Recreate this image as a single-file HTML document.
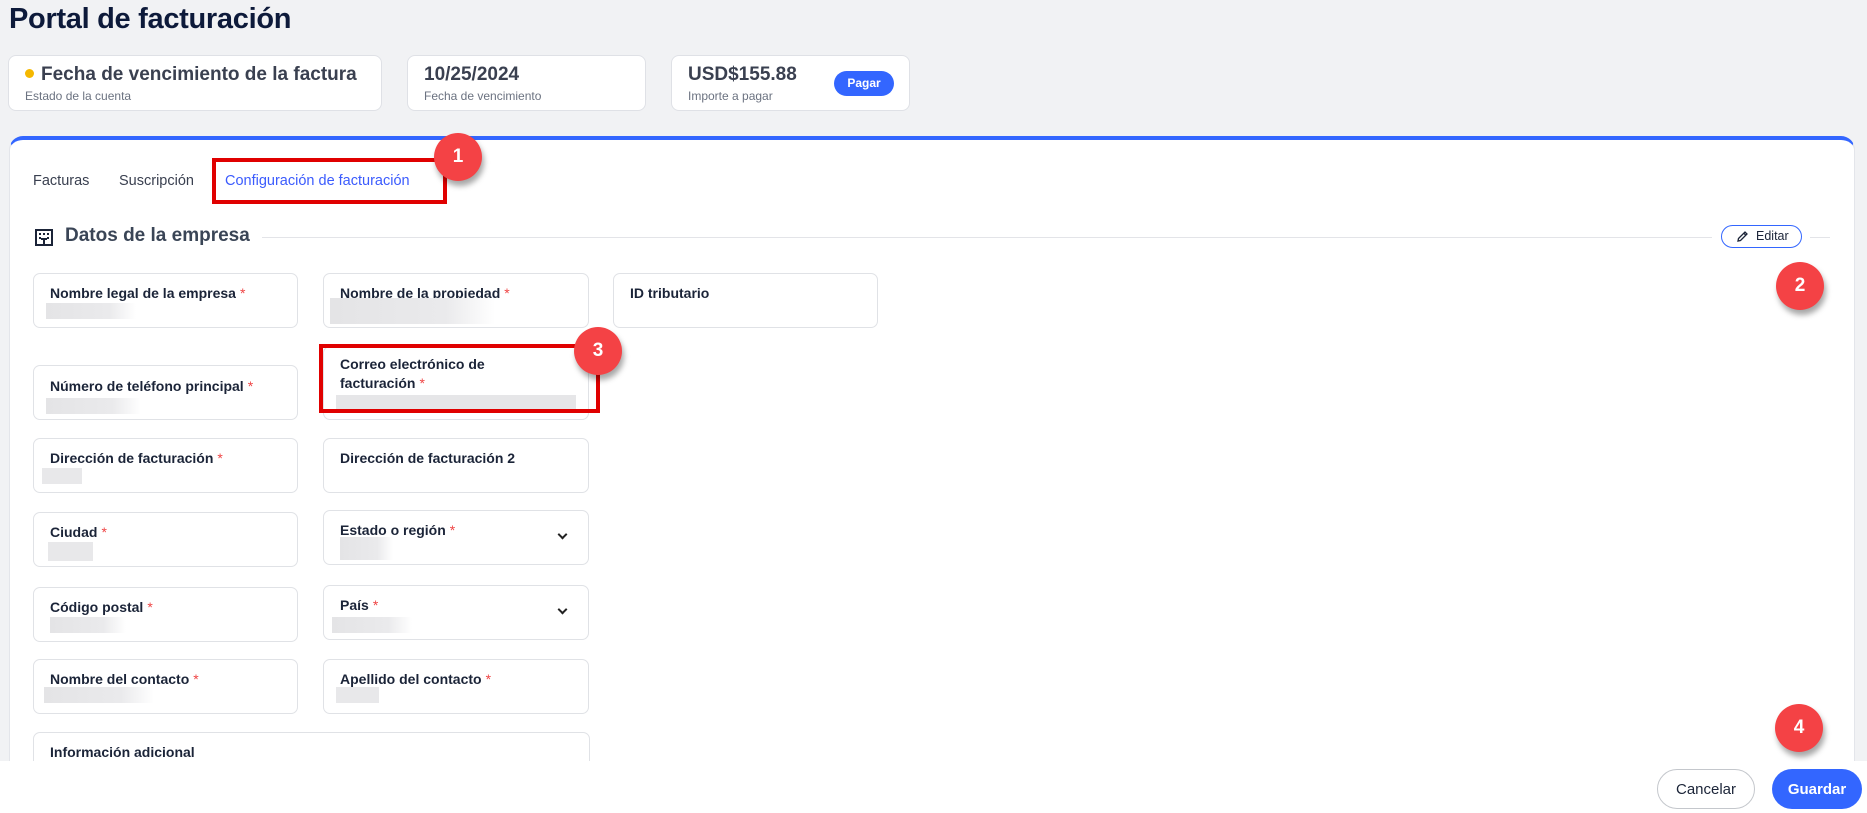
<!DOCTYPE html>
<html><head><meta charset="utf-8"><style>
*{box-sizing:border-box;margin:0;padding:0}
body{width:1867px;height:813px;background:#f1f2f4;font-family:"Liberation Sans",sans-serif;position:relative;overflow:hidden;color:#0f1b33}
.abs{position:absolute}
h1{position:absolute;left:9px;top:2px;font-size:29px;font-weight:bold;color:#0d1a3a;letter-spacing:-0.3px;line-height:34px}
.card{position:absolute;top:55px;height:56px;background:#fff;border:1px solid #dfe1e6;border-radius:8px}
.card .t{position:absolute;left:16px;top:8px;font-size:19px;font-weight:bold;color:#3a4050}
.card .s{position:absolute;left:16px;top:33px;font-size:12px;color:#6b7280}
.panel{position:absolute;left:9px;top:136px;width:1846px;height:640px;background:#fff;border-top:4px solid #3366ff;border-radius:14px 14px 0 0;border-left:1px solid #e3e5ea;border-right:1px solid #e3e5ea}
.tab{position:absolute;top:173px;font-size:14.5px;color:#3a4050}
.f{position:absolute;height:55px;background:#fff;border:1px solid #e0e2e6;border-radius:7px}
.f .l{position:absolute;left:16px;top:10px;font-size:14px;font-weight:bold;color:#1b2438;line-height:19px}
.f .l i{color:#ef4444;font-style:normal;font-weight:normal;margin-left:4px}
.f .p{position:absolute;height:16px;background:linear-gradient(90deg,#e4e4e6,#eaeaec 70%,#fff);top:29px}
.chev{position:absolute;right:22px;top:20px;width:7px;height:7px;border-right:2px solid #222;border-bottom:2px solid #222;transform:rotate(45deg)}
.badge{position:absolute;width:48px;height:48px;border-radius:50%;background:#f44245;color:#fff;font-weight:bold;font-size:19px;display:flex;align-items:center;justify-content:center;box-shadow:2px 5px 6px rgba(0,0,0,.35)}
.red{position:absolute;border:4px solid #e00000}
.btn{position:absolute;top:769px;height:40px;border-radius:20px;font-size:15px;display:flex;align-items:center;justify-content:center}
</style></head><body>
<h1>Portal de facturación</h1>
<div class="card" style="left:8px;width:374px"><div class="t"><span style="display:inline-block;width:9px;height:9px;border-radius:50%;background:#f5b800;margin-right:7px;vertical-align:2px"></span>Fecha de vencimiento de la factura</div><div class="s">Estado de la cuenta</div></div>
<div class="card" style="left:407px;width:239px"><div class="t">10/25/2024</div><div class="s">Fecha de vencimiento</div></div>
<div class="card" style="left:671px;width:239px"><div class="t">USD$155.88</div><div class="s">Importe a pagar</div><div class="abs" style="left:162px;top:15px;width:60px;height:25px;border-radius:13px;background:#3366ff;color:#fff;font-size:12px;font-weight:bold;text-align:center;line-height:25px">Pagar</div></div>
<div class="panel"></div>
<div class="tab" style="left:33px">Facturas</div>
<div class="tab" style="left:119px">Suscripción</div>
<div class="tab" style="left:225px;color:#3b5bfd">Configuración de facturación</div>
<div class="red" style="left:212px;top:158px;width:235px;height:46px"></div>
<svg class="abs" style="left:35px;top:229px" width="18" height="17" viewBox="0 0 18 17"><rect x="1" y="1" width="16" height="15" fill="none" stroke="#1b2438" stroke-width="2"/><g fill="#1b2438"><rect x="4" y="4" width="2" height="2"/><rect x="8" y="4" width="2" height="2"/><rect x="12" y="4" width="2" height="2"/><rect x="4" y="8" width="2" height="2"/><rect x="12" y="8" width="2" height="2"/><rect x="8" y="10" width="2" height="6"/><rect x="6" y="9" width="6" height="2"/></g></svg>
<div class="abs" style="left:65px;top:225px;font-size:19px;font-weight:bold;color:#3a4556">Datos de la empresa</div>
<div class="abs" style="left:262px;top:237px;width:1450px;height:1px;background:#e3e4e8"></div>
<div class="abs" style="left:1810px;top:237px;width:20px;height:1px;background:#e3e4e8"></div>
<div class="abs" style="left:1721px;top:225px;width:81px;height:23px;border:1.5px solid #3366ff;border-radius:12px;font-size:12.5px;color:#1b2438;line-height:20px;padding-left:34px">Editar
<svg class="abs" style="left:14px;top:4px" width="13" height="13" viewBox="0 0 13 13"><path d="M2 11 L2.5 8.5 L9 2 L11 4 L4.5 10.5 Z M7.8 3.2 L9.8 5.2" fill="none" stroke="#1b2438" stroke-width="1.3"/></svg></div>

<div class="f" style="left:33px;top:273px;width:265px"><div class="l">Nombre legal de la empresa<i>*</i></div><div class="p" style="left:12px;width:90px;top:29px"></div></div>
<div class="f" style="left:323px;top:273px;width:266px"><div class="l">Nombre de la propiedad<i>*</i></div><div class="p" style="left:6px;width:165px;top:24px;height:26px"></div></div>
<div class="f" style="left:613px;top:273px;width:265px"><div class="l">ID tributario</div></div>

<div class="f" style="left:33px;top:365px;width:265px"><div class="l" style="top:11px">Número de teléfono principal<i>*</i></div><div class="p" style="left:12px;width:95px;top:32px"></div></div>
<div class="f" style="left:323px;top:346px;width:266px;height:74px"><div class="l" style="top:8px">Correo electrónico de<br>facturación<i>*</i></div><div class="p" style="left:12px;width:240px;top:48px;height:16px;background:#e6e6e8"></div></div>
<div class="red" style="left:319px;top:344px;width:281px;height:69px"></div>

<div class="f" style="left:33px;top:438px;width:265px"><div class="l">Dirección de facturación<i>*</i></div><div class="p" style="left:8px;width:40px;top:29px;background:#e8e8ea"></div></div>
<div class="f" style="left:323px;top:438px;width:266px"><div class="l">Dirección de facturación 2</div></div>

<div class="f" style="left:33px;top:512px;width:265px"><div class="l">Ciudad<i>*</i></div><div class="p" style="left:14px;width:45px;top:29px;height:19px;background:#e8e8ea"></div></div>
<div class="f" style="left:323px;top:510px;width:266px"><div class="l">Estado o región<i>*</i></div><div class="p" style="left:16px;width:53px;top:26px;height:23px"></div><div class="chev"></div></div>

<div class="f" style="left:33px;top:587px;width:265px"><div class="l">Código postal<i>*</i></div><div class="p" style="left:16px;width:76px;top:29px"></div></div>
<div class="f" style="left:323px;top:585px;width:266px"><div class="l">País<i>*</i></div><div class="p" style="left:8px;width:80px;top:31px"></div><div class="chev"></div></div>

<div class="f" style="left:33px;top:659px;width:265px"><div class="l">Nombre del contacto<i>*</i></div><div class="p" style="left:10px;width:110px;top:27px"></div></div>
<div class="f" style="left:323px;top:659px;width:266px"><div class="l">Apellido del contacto<i>*</i></div><div class="p" style="left:12px;width:43px;top:27px;background:#e8e8ea"></div></div>

<div class="f" style="left:33px;top:732px;width:557px;height:60px"><div class="l">Información adicional</div></div>

<div class="abs" style="left:0;top:761px;width:1867px;height:52px;background:#fff"></div>
<div class="btn" style="left:1657px;width:98px;border:1px solid #c4c7cc;color:#1b2438;background:#fff">Cancelar</div>
<div class="btn" style="left:1772px;width:90px;background:#3366ff;color:#fff;font-weight:bold">Guardar</div>

<div class="badge" style="left:434px;top:133px">1</div>
<div class="badge" style="left:1776px;top:262px">2</div>
<div class="badge" style="left:574px;top:327px">3</div>
<div class="badge" style="left:1775px;top:704px">4</div>
</body></html>
